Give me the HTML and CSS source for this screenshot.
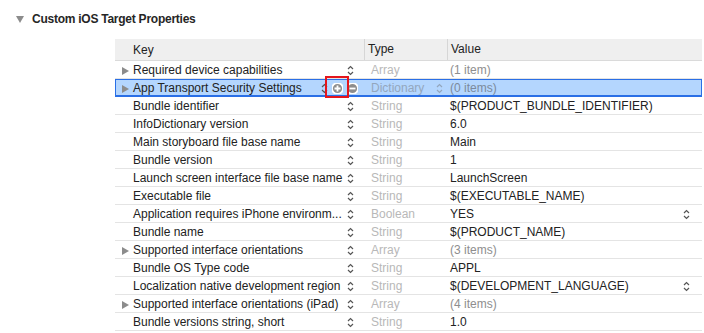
FILE: index.html
```html
<!DOCTYPE html>
<html lang="en">
<head>
    <meta charset="UTF-8">
    <meta name="viewport" content="width=device-width, initial-scale=1.0">
    <title>Custom iOS Target Properties</title>
    <link rel="stylesheet" href="styles.css">
</head>
<body>
    <svg class="defs" width="0" height="0">
        <symbol id="updown" viewBox="0 0 7 11">
            <path d="M1 4 L3.5 1.5 L6 4 M1 7 L3.5 9.5 L6 7" fill="none" stroke="currentColor" stroke-width="1.2"/>
        </symbol>
    </svg>

    <h2 class="section-title"><span class="disclosure open"></span>Custom iOS Target Properties</h2>

    <div class="plist">
        <div class="plist-head">
            <div class="col-key">Key</div>
            <div class="col-type">Type</div>
            <div class="col-value">Value</div>
        </div>

        <div class="row">
            <div class="col-key"><span class="tri"></span><span class="name">Required device capabilities</span><svg class="stepper"><use href="#updown"/></svg></div>
            <div class="col-type">Array</div>
            <div class="col-value muted">(1 item)</div>
        </div>
        <div class="row selected">
            <div class="col-key"><span class="tri"></span><span class="name">App Transport Security Settings</span>
                <svg class="stepper"><use href="#updown"/></svg>
                <svg class="btn-round plus" viewBox="0 0 11 11"><circle cx="5.5" cy="5.5" r="5.5"/><path d="M5.5 2.5 V8.5 M2.5 5.5 H8.5"/></svg>
                <svg class="btn-round minus" viewBox="0 0 11 11"><circle cx="5.5" cy="5.5" r="5.5"/><path d="M2.5 5.5 H8.5"/></svg>
                <span class="highlight"></span>
            </div>
            <div class="col-type">Dictionary<svg class="stepper type-stepper"><use href="#updown"/></svg></div>
            <div class="col-value muted">(0 items)</div>
        </div>
        <div class="row">
            <div class="col-key"><span class="name">Bundle identifier</span><svg class="stepper"><use href="#updown"/></svg></div>
            <div class="col-type">String</div>
            <div class="col-value">$(PRODUCT_BUNDLE_IDENTIFIER)</div>
        </div>
        <div class="row">
            <div class="col-key"><span class="name">InfoDictionary version</span><svg class="stepper"><use href="#updown"/></svg></div>
            <div class="col-type">String</div>
            <div class="col-value">6.0</div>
        </div>
        <div class="row">
            <div class="col-key"><span class="name">Main storyboard file base name</span><svg class="stepper"><use href="#updown"/></svg></div>
            <div class="col-type">String</div>
            <div class="col-value">Main</div>
        </div>
        <div class="row">
            <div class="col-key"><span class="name">Bundle version</span><svg class="stepper"><use href="#updown"/></svg></div>
            <div class="col-type">String</div>
            <div class="col-value">1</div>
        </div>
        <div class="row">
            <div class="col-key"><span class="name">Launch screen interface file base name</span><svg class="stepper"><use href="#updown"/></svg></div>
            <div class="col-type">String</div>
            <div class="col-value">LaunchScreen</div>
        </div>
        <div class="row">
            <div class="col-key"><span class="name">Executable file</span><svg class="stepper"><use href="#updown"/></svg></div>
            <div class="col-type">String</div>
            <div class="col-value">$(EXECUTABLE_NAME)</div>
        </div>
        <div class="row">
            <div class="col-key"><span class="name">Application requires iPhone environm...</span><svg class="stepper"><use href="#updown"/></svg></div>
            <div class="col-type">Boolean</div>
            <div class="col-value">YES<svg class="stepper"><use href="#updown"/></svg></div>
        </div>
        <div class="row">
            <div class="col-key"><span class="name">Bundle name</span><svg class="stepper"><use href="#updown"/></svg></div>
            <div class="col-type">String</div>
            <div class="col-value">$(PRODUCT_NAME)</div>
        </div>
        <div class="row">
            <div class="col-key"><span class="tri"></span><span class="name">Supported interface orientations</span><svg class="stepper"><use href="#updown"/></svg></div>
            <div class="col-type">Array</div>
            <div class="col-value muted">(3 items)</div>
        </div>
        <div class="row">
            <div class="col-key"><span class="name">Bundle OS Type code</span><svg class="stepper"><use href="#updown"/></svg></div>
            <div class="col-type">String</div>
            <div class="col-value">APPL</div>
        </div>
        <div class="row">
            <div class="col-key"><span class="name">Localization native development region</span><svg class="stepper"><use href="#updown"/></svg></div>
            <div class="col-type">String</div>
            <div class="col-value">$(DEVELOPMENT_LANGUAGE)<svg class="stepper"><use href="#updown"/></svg></div>
        </div>
        <div class="row">
            <div class="col-key"><span class="tri"></span><span class="name">Supported interface orientations (iPad)</span><svg class="stepper"><use href="#updown"/></svg></div>
            <div class="col-type">Array</div>
            <div class="col-value muted">(4 items)</div>
        </div>
        <div class="row">
            <div class="col-key"><span class="name">Bundle versions string, short</span><svg class="stepper"><use href="#updown"/></svg></div>
            <div class="col-type">String</div>
            <div class="col-value">1.0</div>
        </div>
    </div>
</body>
</html>
```

FILE: styles.css
```css
* {
    box-sizing: border-box;
}
body {
    margin: 0;
    background: #ffffff;
    color: #222222;
    font-family: "Liberation Sans", Arial, sans-serif;
    font-size: 12px;
}
.defs {
    position: absolute;
}
.section-title {
    display: flex;
    align-items: center;
    margin: 0;
    padding: 11px 0 0 16px;
    height: 27px;
    font-size: 12px;
    font-weight: 700;
    letter-spacing: -0.25px;
    color: #262626;
}
.disclosure.open {
    width: 0;
    height: 0;
    margin-right: 8px;
    border-left: 4px solid transparent;
    border-right: 4px solid transparent;
    border-top: 7px solid #8c8c8c;
}
.plist {
    margin: 12px 2px 0 115px;
}
.plist-head,
.row {
    display: grid;
    grid-template-columns: 249px 83px 1fr;
    height: 18px;
    line-height: 17px;
    padding-top: 1px;
    border-bottom: 1px solid #e4e4e4;
}
.plist-head {
    height: 22px;
    line-height: 20px;
    padding-top: 0;
    background: #efefef;
    border-bottom-color: #dadada;
}
.plist-head .col-key {
    padding-left: 18px;
}
.plist-head .col-type {
    border-left: 1px solid #d6d6d6;
    padding-left: 3px;
}
.plist-head .col-value {
    border-left: 1px solid #d6d6d6;
    padding-left: 3px;
}
.col-key {
    display: flex;
    align-items: center;
    position: relative;
    padding-left: 7px;
    padding-right: 10px;
}
.col-key .name {
    margin-left: 11px;
    flex: 1;
    white-space: nowrap;
}
.tri {
    flex: none;
    width: 0;
    height: 0;
    border-top: 4px solid transparent;
    border-bottom: 4px solid transparent;
    border-left: 7px solid #8c8c8c;
}
.col-key .tri + .name {
    margin-left: 4px;
}
.stepper {
    width: 7px;
    height: 11px;
    color: #555555;
    flex: none;
}
.row .col-type {
    display: flex;
    align-items: center;
    padding-left: 7px;
    color: #b8b8b8;
}
.row .col-value {
    display: flex;
    align-items: center;
    padding-left: 3px;
    padding-right: 12px;
    color: #222222;
}
.col-value .stepper {
    margin-left: auto;
}
.col-value.muted {
    color: #8e8e8e;
}
.row.selected {
    background: #b4d6fe;
    box-shadow: inset 0 0 0 1px #2a6fe6;
    border-bottom-color: #2a6fe6;
}
.row.selected .col-key {
    padding-right: 6px;
}
.row.selected .col-type {
    color: #93a6bd;
}
.row.selected .col-value.muted {
    color: #7b8a9c;
}
.type-stepper {
    margin-left: auto;
    margin-right: 4px;
    color: #93a6bd;
}
.btn-round {
    flex: none;
    width: 11px;
    height: 11px;
    margin-left: 4px;
    fill: #8d8d8d;
    stroke: #ffffff;
    stroke-width: 1.8;
}
.highlight {
    position: absolute;
    left: 210px;
    top: -4px;
    width: 24px;
    height: 22px;
    border: 2px solid #e5161c;
}
```
